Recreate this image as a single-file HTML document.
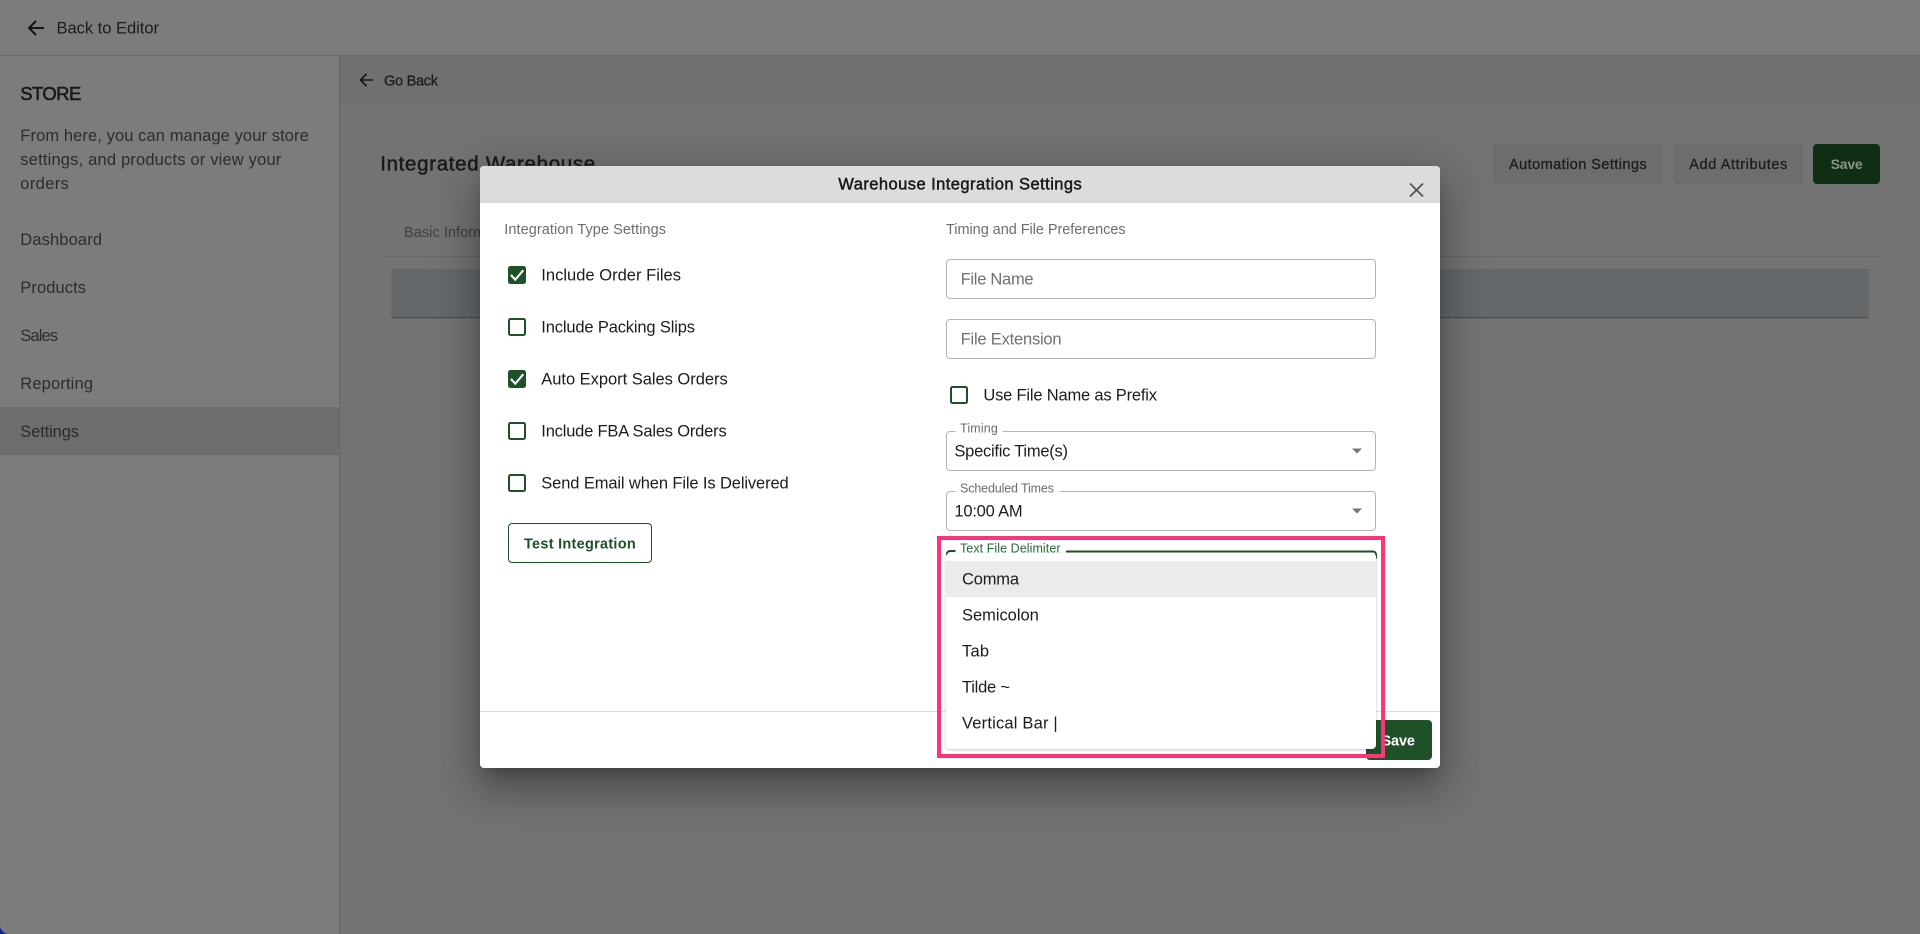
<!DOCTYPE html>
<html lang="en"><head><meta charset="utf-8"><title>Warehouse Integration Settings</title>
<style>
html,body{margin:0;padding:0;width:1920px;height:934px;overflow:hidden;background:#0a1f9c}
*{box-sizing:border-box}
#page{position:absolute;left:0;top:0;width:1920px;height:934px;background:#737373;border-bottom-left-radius:9px;overflow:hidden}
.abs{position:absolute}
svg{position:absolute;left:0;top:0;display:block}
text{font-family:"Liberation Sans",Arial,sans-serif;font-size:16.5px;fill:#1c1c1c;transform:translateY(-.5px)}
.semi{stroke:currentColor;stroke-width:.3px}
</style></head><body>
<div id="page">
<div class="abs" style="left:0;top:0;width:1920px;height:55px;background:#7c7c7c"></div>
<div class="abs" style="left:0;top:55px;width:1920px;height:1px;background:#6c6c6c"></div>
<div class="abs" style="left:0;top:56px;width:339px;height:878px;background:#7c7c7c"></div>
<div class="abs" style="left:339px;top:56px;width:1px;height:878px;background:#676767"></div>
<div class="abs" style="left:340px;top:56px;width:1580px;height:48px;background:#6f7072"></div>
<div class="abs" style="left:0;top:407px;width:339px;height:48px;background:#6b6d6f"></div>
<div class="abs" style="left:380px;top:256px;width:1500px;height:1px;background:#686868"></div>
<div class="abs" style="left:392px;top:269px;width:1476px;height:48px;background:#65696c;box-shadow:0 1px 1px rgba(0,0,0,.4)"></div>
<div class="abs" style="left:1493px;top:144px;width:170px;height:40px;background:#6d6d6d;border-radius:4px"></div>
<div class="abs" style="left:1673px;top:144px;width:130px;height:40px;background:#6d6d6d;border-radius:4px"></div>
<div class="abs" style="left:1813px;top:144px;width:67px;height:40px;background:#0f2e14;border-radius:4px"></div>
<svg width="1920" height="934" viewBox="0 0 1920 934" fill="none">
<path d="M44 28H29.5M36 21l-7 7 7 7" stroke="#151515" stroke-width="2"/>
<text x="56.5" y="34" textLength="102.5">Back to Editor</text>
<text x="20.3" y="100.5" textLength="61" style="font-size:18.5px;stroke-width:.55px" class="semi" color="#141414">STORE</text>
<text x="20.3" y="141.5" textLength="288.5" style="fill:#2c2c2c">From here, you can manage your store</text>
<text x="20.3" y="165.5" textLength="261" style="fill:#2c2c2c">settings, and products or view your</text>
<text x="20.3" y="189.5" textLength="48.5" style="fill:#2c2c2c">orders</text>
<text x="20.3" y="245.5" textLength="81.7" style="fill:#2c2c2c">Dashboard</text>
<text x="20.3" y="293.5" textLength="65.7" style="fill:#2c2c2c">Products</text>
<text x="20.3" y="341.5" textLength="37.7" style="fill:#2c2c2c">Sales</text>
<text x="20.3" y="389.5" textLength="72.7" style="fill:#2c2c2c">Reporting</text>
<text x="20.3" y="437.5" textLength="58.7" style="fill:#2c2c2c">Settings</text>
<path d="M373 80H360.8M366.5 74l-6 6 6 6" stroke="#151515" stroke-width="1.6"/>
<text x="384" y="86" textLength="54" style="font-size:14.5px" class="semi" color="#1c1c1c">Go Back</text>
<text x="380.2" y="171" textLength="215" style="font-size:20.5px;stroke-width:.45px" class="semi" color="#141414">Integrated Warehouse</text>
<text x="404" y="237.5" textLength="113" style="font-size:14.5px;fill:#3f3f3f">Basic Information</text>
<text x="1509" y="169.5" textLength="137.7" style="font-size:14.5px" class="semi" color="#1c1c1c">Automation Settings</text>
<text x="1689.3" y="169.5" textLength="98" style="font-size:14.5px" class="semi" color="#1c1c1c">Add Attributes</text>
<text x="1830.7" y="169.5" textLength="32" style="font-size:14px;font-weight:bold;fill:#8a958b">Save</text>
</svg>

<div class="abs" style="left:480px;top:166px;width:960px;height:602px;background:#fff;border-radius:4px;box-shadow:0 11px 15px -7px rgba(0,0,0,.26),0 24px 38px 3px rgba(0,0,0,.18),0 9px 46px 8px rgba(0,0,0,.16);overflow:hidden">
<div style="height:37px;background:#dcdcdc"></div>
</div>
<svg width="1920" height="934" viewBox="0 0 1920 934" fill="none">
<text x="838.3" y="190" textLength="243.5" style="stroke-width:.45px" class="semi" color="#111">Warehouse Integration Settings</text>
<path d="M1410 183.5l13 13M1423 183.5l-13 13" stroke="#555" stroke-width="1.8"/>
<text x="504.3" y="234.5" textLength="161.7" style="font-size:14.5px;fill:#6d6d6d">Integration Type Settings</text>
<text x="946" y="234.5" textLength="179.6" style="font-size:14.5px;fill:#6d6d6d">Timing and File Preferences</text>

<rect x="508" y="266" width="18" height="18" rx="2.5" fill="#1e5128"/>
<path d="M511 275l4.300 4.700 8-9.500" stroke="#fff" stroke-width="2.1"/>
<rect x="509" y="319" width="16" height="16" rx="1.5" stroke="#1e5128" stroke-width="2"/>
<rect x="508" y="370" width="18" height="18" rx="2.5" fill="#1e5128"/>
<path d="M511 379l4.300 4.700 8-9.500" stroke="#fff" stroke-width="2.1"/>
<rect x="509" y="423" width="16" height="16" rx="1.5" stroke="#1e5128" stroke-width="2"/>
<rect x="509" y="475" width="16" height="16" rx="1.5" stroke="#1e5128" stroke-width="2"/>
<text x="541.3" y="281" textLength="139.7">Include Order Files</text>
<text x="541.3" y="333" textLength="153.7">Include Packing Slips</text>
<text x="541.3" y="385" textLength="186.4">Auto Export Sales Orders</text>
<text x="541.3" y="437" textLength="185.4">Include FBA Sales Orders</text>
<text x="541.3" y="489" textLength="247.4">Send Email when File Is Delivered</text>
<rect x="508.5" y="523.5" width="143" height="39" rx="3.5" stroke="#1e5128" stroke-width="1"/>
<text x="524" y="549" textLength="111.7" style="font-size:14.5px;font-weight:bold;fill:#1e5128">Test Integration</text>

<rect x="946.5" y="259.5" width="429" height="39" rx="3.5" stroke="#b5b5b5"/>
<rect x="946.5" y="319.5" width="429" height="39" rx="3.5" stroke="#b5b5b5"/>
<text x="960.6" y="285" textLength="73" style="fill:#707070">File Name</text>
<text x="960.6" y="345" textLength="101" style="fill:#707070">File Extension</text>
<rect x="951" y="387" width="16" height="16" rx="1.5" stroke="#1e5128" stroke-width="2"/>
<text x="983.4" y="401" textLength="173.6">Use File Name as Prefix</text>

<rect x="946.5" y="431.5" width="429" height="39" rx="3.5" stroke="#b5b5b5"/>
<rect x="955.5" y="429" width="47" height="4" fill="#fff"/>
<text x="960" y="433" textLength="37.8" style="font-size:12.5px;fill:#6d6d6d">Timing</text>
<text x="954.4" y="457" textLength="113.6">Specific Time(s)</text>
<path d="M1352 448.5h10l-5 5z" fill="#757575"/>

<rect x="946.5" y="491.5" width="429" height="39" rx="3.5" stroke="#b5b5b5"/>
<rect x="955.5" y="489" width="104" height="4" fill="#fff"/>
<text x="960" y="493" textLength="94" style="font-size:12.5px;fill:#6d6d6d">Scheduled Times</text>
<text x="954.4" y="517" textLength="68.2">10:00 AM</text>
<path d="M1352 508.5h10l-5 5z" fill="#757575"/>

<rect x="480" y="711" width="960" height="1" fill="#dedede"/>
<rect x="1366" y="720" width="66" height="40" rx="4" fill="#1e5128"/>
<text x="1381.5" y="746" textLength="33.5" style="font-size:14.5px;font-weight:bold;fill:#fff">Save</text>

<path d="M947 558v-4a3 3 0 0 1 3-3h5.5M1066 551.5h307a3 3 0 0 1 3 3v4" stroke="#1e5128" stroke-width="2"/>
<text x="960" y="553" textLength="100.5" style="font-size:12.5px;fill:#2c6a3a">Text File Delimiter</text>
</svg>

<div class="abs" style="left:946px;top:553px;width:430px;height:196px;background:#fff;border-radius:4px;box-shadow:0 1px 3px rgba(0,0,0,.22)"></div>
<div class="abs" style="left:946px;top:561px;width:430px;height:36px;background:#ebebeb"></div>
<svg width="1920" height="934" viewBox="0 0 1920 934" fill="none">
<text x="962" y="585" textLength="57">Comma</text>
<text x="962" y="621" textLength="76.8">Semicolon</text>
<text x="962" y="657" textLength="27">Tab</text>
<text x="962" y="693" textLength="48">Tilde ~</text>
<text x="962" y="729" textLength="95.7">Vertical Bar |</text>
<rect x="939" y="538" width="444" height="218" stroke="#ff3377" stroke-width="4"/>
</svg>
</div>
</body></html>
